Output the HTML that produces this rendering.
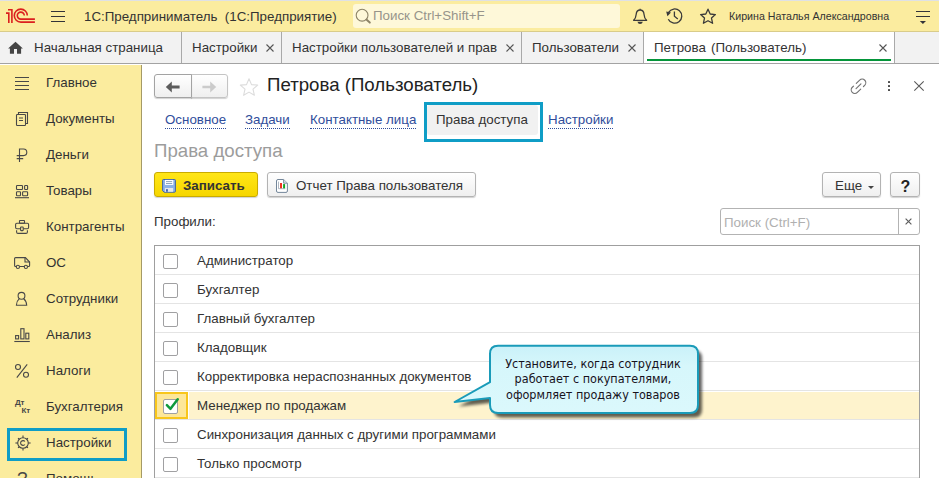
<!DOCTYPE html>
<html lang="ru">
<head>
<meta charset="utf-8">
<title>Петрова (Пользователь)</title>
<style>
html,body{margin:0;padding:0;}
body{width:939px;height:478px;overflow:hidden;position:relative;background:#fff;font-family:"Liberation Sans",Arial,sans-serif;color:#333;font-size:13.33px;line-height:16px;}
.a{position:absolute;white-space:nowrap;}
.t{position:absolute;white-space:nowrap;font-size:13.33px;line-height:16px;color:#333;}
svg{position:absolute;overflow:visible;}
#hdr{left:0;top:0;width:939px;height:32px;background:#fbec9f;}
#tabs{left:0;top:32px;width:939px;height:31px;background:#f2f2f2;}
.sep{position:absolute;top:32px;width:1px;height:31px;background:#a9a9a9;}
.lnk{position:absolute;white-space:nowrap;top:112px;font-size:13.33px;line-height:16px;color:#2f4d9b;}
.lnk i{position:absolute;left:0;right:0;top:16px;height:0;border-top:1px dotted #2f4d9b;}
.btn{position:absolute;box-sizing:border-box;border:1px solid #b3b3b3;border-radius:3px;background:linear-gradient(#ffffff,#efefef);box-shadow:0 1px 1px rgba(0,0,0,.18);}
.rs{position:absolute;left:155px;width:764px;height:1px;background:#e4e4e4;}
.cb{position:absolute;left:163px;width:13px;height:13px;border:1px solid #a0a0a2;border-radius:2px;background:#fff;}
.x{position:absolute;width:8px;height:8px;}
</style>
</head>
<body>

<div id="hdr" class="a"></div>
<div class="a" style="left:0;top:0;width:939px;height:1px;background:#dfe1e5"></div>
<div class="a" style="left:0;top:31px;width:939px;height:1px;background:#d9cc8a"></div>
<svg style="left:0px;top:0px" width="70" height="32" viewBox="0 0 70 32">
 <g fill="none" stroke="#db1f1f" stroke-width="1.6">
  <path d="M8 9.8 H11.9 V22.9"/>
  <path d="M6 13.1 H8.8 V22.9"/>
  <path d="M27.3 15.6 A6.5 6.5 0 1 0 20.8 22.1 H34.9"/>
  <path d="M24.3 15.6 A3.5 3.5 0 1 0 20.8 19.1 H34.9"/>
 </g>
 <g fill="none" stroke="#333338" stroke-width="1.2"><path d="M51 11.5 H65 M51 16.5 H65 M51 21.5 H65"/></g>
</svg>
<div class="t" style="left:84px;top:9px;">1С:Предприниматель&nbsp; (1С:Предприятие)</div>
<div class="a" style="left:353px;top:4px;width:267px;height:24px;background:#fef8d9;border-radius:3px;"></div>
<svg style="left:353px;top:4px" width="20" height="24" viewBox="353 4 20 24"><circle cx="362.1" cy="15.2" r="5.9" fill="none" stroke="#8d8468" stroke-width="1.1"/><path d="M366.4 19.6 L369.8 22.6" stroke="#8d8468" stroke-width="2" stroke-linecap="round"/></svg>
<div class="t" style="left:373px;top:8px;color:#97948b;">Поиск Ctrl+Shift+F</div>
<svg style="left:630px;top:6px" width="20" height="20" viewBox="630 6 20 20"><path d="M633.6 20.3 C635.6 18.6 636 16.8 636.2 14.2 C636.4 11.4 637.8 10 640.1 10 C642.4 10 643.8 11.4 644 14.2 C644.2 16.8 644.6 18.6 646.6 20.3 Z M640.1 10 V8.8" fill="none" stroke="#3a3a3a" stroke-width="1.3" stroke-linejoin="round"/><path d="M637.4 21.7 H642.8 Q642.2 23.9 640.1 23.9 Q638 23.9 637.4 21.7 Z" fill="#3a3a3a"/></svg>
<svg style="left:664px;top:6px" width="20" height="20" viewBox="664 6 20 20"><path d="M668.6 12.4 A7.1 7.1 0 1 1 668.3 19.2" fill="none" stroke="#3a3a3a" stroke-width="1.3"/><path d="M666.2 11.6 L671 12.4 L667.4 16.2 Z" fill="#3a3a3a"/><path d="M674.4 11.4 V16.2 L677.8 18.9" fill="none" stroke="#3a3a3a" stroke-width="1.3"/></svg>
<svg style="left:698px;top:6px" width="20" height="20" viewBox="698 6 20 20"><path d="M708 9.2 L710.2 14 L715.4 14.6 L711.5 18.1 L712.6 23.3 L708 20.7 L703.4 23.3 L704.5 18.1 L700.6 14.6 L705.8 14 Z" fill="none" stroke="#3a3a3a" stroke-width="1.3" stroke-linejoin="round"/></svg>
<div class="t" style="left:729px;top:8px;font-size:10.67px;">Кирина Наталья Александровна</div>
<svg style="left:912px;top:6px" width="22" height="20" viewBox="912 6 22 20"><path d="M916 11.5 H930 M916 16.5 H930" stroke="#333338" stroke-width="1.2" fill="none"/><path d="M919.8 20.9 H926 L922.9 23.9 Z" fill="#333338"/></svg>
<div id="tabs" class="a"></div>
<div class="a" style="left:644px;top:32px;width:250px;height:31px;background:#fff"></div>
<div class="a" style="left:0;top:63px;width:939px;height:1px;background:#a3a3a3"></div>
<div class="sep" style="left:181px"></div>
<div class="sep" style="left:281px"></div>
<div class="sep" style="left:521px"></div>
<div class="sep" style="left:643px"></div>
<div class="sep" style="left:894px"></div>
<svg style="left:6px;top:40px" width="18" height="16" viewBox="6 40 18 16"><path d="M15.5 41.8 L8.1 48.6 H9.9 V53.8 H14 V49 H17 V53.8 H21.1 V48.6 H22.9 Z" fill="#454545"/></svg>
<div class="t" style="left:34px;top:40px;">Начальная страница</div>
<div class="t" style="left:192px;top:40px;">Настройки</div>
<svg style="left:266px;top:44px" width="8" height="8" viewBox="0 0 8 8"><path d="M0.5 0.5 L7.5 7.5 M7.5 0.5 L0.5 7.5" stroke="#555" stroke-width="1.1" fill="none"/></svg>
<div class="t" style="left:292px;top:40px;">Настройки пользователей и прав</div>
<svg style="left:506px;top:44px" width="8" height="8" viewBox="0 0 8 8"><path d="M0.5 0.5 L7.5 7.5 M7.5 0.5 L0.5 7.5" stroke="#555" stroke-width="1.1" fill="none"/></svg>
<div class="t" style="left:532px;top:40px;">Пользователи</div>
<svg style="left:628px;top:44px" width="8" height="8" viewBox="0 0 8 8"><path d="M0.5 0.5 L7.5 7.5 M7.5 0.5 L0.5 7.5" stroke="#555" stroke-width="1.1" fill="none"/></svg>
<div class="t" style="left:654px;top:40px;word-spacing:1.5px">Петрова (Пользователь)</div>
<svg style="left:879px;top:44px" width="8" height="8" viewBox="0 0 8 8"><path d="M0.5 0.5 L7.5 7.5 M7.5 0.5 L0.5 7.5" stroke="#555" stroke-width="1.1" fill="none"/></svg>
<div class="a" style="left:647px;top:59px;width:244px;height:2px;background:#04953a"></div>
<div class="a" style="left:0;top:65px;width:141px;height:413px;background:#fbec9e;"></div>
<div class="a" style="left:141px;top:65px;width:1px;height:413px;background:#a59a66;"></div>
<div class="t" style="left:46px;top:75px">Главное</div>
<div class="t" style="left:46px;top:111px">Документы</div>
<div class="t" style="left:46px;top:147px">Деньги</div>
<div class="t" style="left:46px;top:183px">Товары</div>
<div class="t" style="left:46px;top:219px">Контрагенты</div>
<div class="t" style="left:46px;top:255px">ОС</div>
<div class="t" style="left:46px;top:291px">Сотрудники</div>
<div class="t" style="left:46px;top:327px">Анализ</div>
<div class="t" style="left:46px;top:363px">Налоги</div>
<div class="t" style="left:46px;top:399px">Бухгалтерия</div>
<div class="t" style="left:46px;top:435px">Настройки</div>
<div class="t" style="left:46px;top:471px">Помощь</div>
<div class="a" style="left:15px;top:77px;width:14px;height:1px;background:#484848"></div>
<div class="a" style="left:15px;top:81px;width:14px;height:1px;background:#484848"></div>
<div class="a" style="left:15px;top:85px;width:14px;height:1px;background:#484848"></div>
<div class="a" style="left:15px;top:89px;width:14px;height:1px;background:#484848"></div>
<svg style="left:14px;top:110px" width="16" height="18" viewBox="14 110 16 18" fill="none" stroke="#484848" stroke-width="1.1"><rect x="16.5" y="114.5" width="9" height="11" rx="0.8"/><path d="M18.5 114 V112.5 H27.5 V123.5 H26"/><path d="M19 118 H23 M19 120.5 H23"/></svg>
<svg style="left:14px;top:146px" width="16" height="18" viewBox="14 146 16 18" fill="none" stroke="#484848" stroke-width="1.1"><path d="M19.5 162 V149 H23.5 A3.3 3.3 0 0 1 23.5 155.6 H16.7 M16.7 158.6 H23.2"/></svg>
<svg style="left:14px;top:182px" width="16" height="18" viewBox="14 182 16 18" fill="none" stroke="#484848" stroke-width="1.1"><rect x="16.5" y="185.5" width="6" height="4" rx="0.7"/><rect x="24.6" y="185.5" width="3" height="4" rx="0.7"/><rect x="16.5" y="191.7" width="4" height="4" rx="0.7"/><rect x="22.6" y="191.7" width="5" height="4" rx="0.7"/><path d="M15 197.7 H29"/></svg>
<svg style="left:14px;top:218px" width="16" height="18" viewBox="14 218 16 18" fill="none" stroke="#484848" stroke-width="1.1"><rect x="19.5" y="220.5" width="5" height="2.8" rx="0.5"/><rect x="15.6" y="223.3" width="13" height="5.4" rx="1.2"/><path d="M16.6 230.2 V232 Q16.6 233.4 18 233.4 H26 Q27.4 233.4 27.4 232 V230.2"/><rect x="20.6" y="227" width="2.6" height="3.6" rx="0.5" fill="#fbed9e"/></svg>
<svg style="left:14px;top:254px" width="16" height="18" viewBox="14 254 16 18" fill="none" stroke="#484848" stroke-width="1.1"><path d="M16.2 266.5 H15.6 Q14.6 266.5 14.6 265.5 V258.6 Q14.6 257.6 15.6 257.6 H25.4 L29.6 262 V265.5 Q29.6 266.5 28.6 266.5 H27.6 M19.6 266.5 H24.2"/><path d="M25 257.8 V262 H29.4"/><circle cx="17.9" cy="266.9" r="1.6"/><circle cx="25.9" cy="266.9" r="1.6"/></svg>
<svg style="left:14px;top:290px" width="16" height="18" viewBox="14 290 16 18" fill="none" stroke="#484848" stroke-width="1.1"><circle cx="21.5" cy="295.8" r="3.4"/><path d="M19.3 298.7 Q16.6 301 16.4 305.3 H26.7 Q26.5 301 23.7 298.7"/></svg>
<svg style="left:14px;top:326px" width="16" height="18" viewBox="14 326 16 18" fill="none" stroke="#484848" stroke-width="1.1"><rect x="15.6" y="335.6" width="3" height="3.3"/><rect x="20.8" y="328.7" width="3.2" height="10.2"/><rect x="25.8" y="333.2" width="3" height="5.7"/><path d="M14.3 341.5 H29.8"/></svg>
<svg style="left:14px;top:362px" width="16" height="18" viewBox="14 362 16 18" fill="none" stroke="#484848" stroke-width="1.1"><circle cx="18" cy="367" r="2.5"/><circle cx="26" cy="374.7" r="2.5"/><path d="M27.2 364.3 L16.8 377.6"/></svg>
<div class="a" style="left:15px;top:398px;font-size:8px;line-height:10px;font-weight:bold;color:#484848;letter-spacing:-0.2px">Дт</div>
<div class="a" style="left:21.5px;top:406px;font-size:8px;line-height:10px;font-weight:bold;color:#484848;letter-spacing:-0.2px">Кт</div>
<svg style="left:14px;top:434px" width="18" height="18" viewBox="13.4 434.1 18 18" fill="none" stroke="#484848" stroke-width="1.1"><circle cx="22.4" cy="443.1" r="5.3"/><path d="M24.3 441.6 A2.4 2.4 0 1 0 24.3 444.6"/><path d="M27.70 443.10 L30.00 443.10"/><path d="M26.15 446.85 L27.35 448.05"/><path d="M22.40 448.40 L22.40 450.70"/><path d="M18.65 446.85 L17.45 448.05"/><path d="M17.10 443.10 L14.80 443.10"/><path d="M18.65 439.35 L17.45 438.15"/><path d="M22.40 437.80 L22.40 435.50"/><path d="M26.15 439.35 L27.35 438.15"/></svg>
<div class="a" style="left:17px;top:469px;font-size:19px;line-height:20px;color:#484848;">?</div>
<div class="a" style="left:7px;top:428px;width:114px;height:27px;border:3px solid #0f9dc6;"></div>
<div class="btn" style="left:191px;top:74px;width:37px;height:24px;border-color:#c4c4c4;border-radius:0 3px 3px 0;"></div>
<div class="btn" style="left:154px;top:74px;width:38px;height:24px;border-color:#a3a3a3;border-radius:3px 0 0 3px;"></div>
<svg style="left:165px;top:80.5px" width="16" height="12" viewBox="0 0 16 12"><path d="M6.8 0.6 L0.8 6 L6.8 11.4 V7.5 H14.6 V4.5 H6.8 Z" fill="#5c5c5c"/></svg>
<svg style="left:201px;top:80.5px" width="16" height="12" viewBox="0 0 16 12"><path d="M9.2 0.6 L15.2 6 L9.2 11.4 V7.3 H1.4 V4.7 H9.2 Z" fill="#cbcbcb"/></svg>
<svg style="left:239px;top:76.5px" width="20" height="20" viewBox="0 0 20 19"><path d="M10 1.3 L12.5 7.1 L18.7 7.6 L14 11.7 L15.4 17.8 L10 14.6 L4.6 17.8 L6 11.7 L1.3 7.6 L7.5 7.1 Z" fill="none" stroke="#dcdcdc" stroke-width="1.1" stroke-linejoin="round"/></svg>
<div class="a" style="left:267px;top:73px;font-size:18.67px;line-height:24px;color:#222;">Петрова (Пользователь)</div>
<svg style="left:848px;top:76px" width="22" height="22" viewBox="848 76 22 22"><g transform="rotate(-44 858.5 86.3) translate(858.5 86.3)" fill="none" stroke="#727272" stroke-width="1.15" stroke-linecap="round"><path d="M0.4 -3.6 H5.1 A3.6 3.6 0 0 1 5.1 3.6 H3.4"/><path d="M-0.4 3.6 H-5.1 A3.6 3.6 0 0 1 -5.1 -3.6 H-3.4"/><path d="M-3.4 0 H3.4"/></g></svg>
<div class="a" style="left:888px;top:81px;width:2px;height:2px;background:#4a4a4a;border-radius:0.5px"></div>
<div class="a" style="left:888px;top:85px;width:2px;height:2px;background:#4a4a4a;border-radius:0.5px"></div>
<div class="a" style="left:888px;top:89px;width:2px;height:2px;background:#4a4a4a;border-radius:0.5px"></div>
<svg style="left:914px;top:81px" width="10" height="10" viewBox="0 0 10 10"><path d="M0.3 0.3 L9.7 9.7 M9.7 0.3 L0.3 9.7" stroke="#5a5a5a" stroke-width="1.1"/></svg>
<div class="lnk" style="left:165px">Основное<i></i></div>
<div class="lnk" style="left:245px">Задачи<i></i></div>
<div class="lnk" style="left:310px">Контактные лица<i></i></div>
<div class="a" style="left:427px;top:105px;width:111px;height:30px;background:#f1f1f1;border-radius:3px"></div>
<div class="a" style="left:424px;top:102px;width:113px;height:34px;border:3px solid #0f9dc6;"></div>
<div class="t" style="left:436px;top:112px;">Права доступа</div>
<div class="lnk" style="left:548px">Настройки<i></i></div>
<div class="a" style="left:154px;top:139px;font-size:18.67px;line-height:24px;color:#9c9c9c;">Права доступа</div>
<div class="btn" style="left:154px;top:172px;width:104px;height:25px;background:linear-gradient(#ffe617,#f6d600);border-color:#c9ab00;"></div>
<svg style="left:160px;top:177px" width="18" height="18" viewBox="160 177 18 18"><path d="M162.6 180.3 Q162.6 179.5 163.4 179.5 H174.6 Q175.4 179.5 175.4 180.3 V191.4 Q175.4 192.2 174.6 192.2 H164.2 L162.6 190.7 Z" fill="#8db3e6" stroke="#3f62a3" stroke-width="1"/><rect x="165" y="179.9" width="8.3" height="5" fill="#fff"/><path d="M166 181.6 H172.2 M166 183.5 H172.2" stroke="#7f9cb5" stroke-width="0.9"/><rect x="164.9" y="188" width="8.2" height="3.8" fill="#e3e7ea"/><rect x="166" y="189.2" width="1.9" height="2.5" fill="#3b60b3"/></svg>
<div class="t" style="left:183px;top:178px;font-weight:bold;">Записать</div>
<div class="btn" style="left:267px;top:172px;width:209px;height:25px;"></div>
<svg style="left:274px;top:177px" width="18" height="18" viewBox="274 177 18 18"><path d="M276.5 181 Q276.5 179.5 278 179.5 H283.6 L287.4 183.2 V191 Q287.4 192.4 286 192.4 H278 Q276.5 192.4 276.5 191 Z" fill="#fff" stroke="#73869a" stroke-width="1"/><path d="M283.6 179.6 V183.2 H287.3" fill="#dfe4ea" stroke="#73869a" stroke-width="0.9"/><path d="M278.5 181.6 V188.7 H285.3" fill="none" stroke="#9aa6b2" stroke-width="0.8"/><rect x="280" y="183" width="2" height="5.3" fill="#ef3221"/><rect x="283.1" y="184.1" width="2" height="4.2" fill="#12a323"/></svg>
<div class="t" style="left:296px;top:178px;">Отчет Права пользователя</div>
<div class="btn" style="left:822px;top:172px;width:59px;height:25px;"></div>
<div class="t" style="left:835px;top:178px;">Еще</div>
<svg style="left:868px;top:186px" width="6" height="3" viewBox="0 0 6 3"><path d="M0 0 H6 L3 3 Z" fill="#444"/></svg>
<div class="btn" style="left:890px;top:172px;width:30px;height:25px;"></div>
<div class="a" style="left:900.5px;top:178px;font-size:16px;line-height:18px;font-weight:bold;color:#222;">?</div>
<div class="t" style="left:154px;top:214px;">Профили:</div>
<div class="a" style="left:720px;top:208px;width:200px;height:27px;border:1px solid #b3b3b3;border-radius:3px;box-sizing:border-box;background:#fff"></div>
<div class="a" style="left:898px;top:209px;width:1px;height:25px;background:#b3b3b3"></div>
<div class="t" style="left:724px;top:215px;color:#b0b0b0;">Поиск (Ctrl+F)</div>
<svg style="left:905px;top:218px" width="7" height="7" viewBox="0 0 7 7"><path d="M0.6 0.6 L6.4 6.4 M6.4 0.6 L0.6 6.4" stroke="#5c5c5c" stroke-width="1.15"/></svg>
<div class="a" style="left:154px;top:245px;width:766px;height:240px;border:1px solid #9f9f9f;box-sizing:border-box;"></div>
<div class="a" style="left:189px;top:392px;width:730px;height:27px;background:#fef3cd"></div>
<div class="a" style="left:155px;top:392px;width:33px;height:27px;background:#fde799;border:2px solid #f8c61c;box-sizing:border-box"></div>
<div class="rs" style="top:274px"></div>
<i class="cb" style="top:254px"></i>
<div class="t" style="left:197px;top:253px">Администратор</div>
<div class="rs" style="top:303px"></div>
<i class="cb" style="top:283px"></i>
<div class="t" style="left:197px;top:282px">Бухгалтер</div>
<div class="rs" style="top:332px"></div>
<i class="cb" style="top:312px"></i>
<div class="t" style="left:197px;top:311px">Главный бухгалтер</div>
<div class="rs" style="top:361px"></div>
<i class="cb" style="top:341px"></i>
<div class="t" style="left:197px;top:340px">Кладовщик</div>
<div class="rs" style="top:390px"></div>
<i class="cb" style="top:370px"></i>
<div class="t" style="left:197px;top:369px">Корректировка нераспознанных документов</div>
<div class="rs" style="top:419px"></div>
<i class="cb" style="top:399px"></i>
<div class="t" style="left:197px;top:398px">Менеджер по продажам</div>
<div class="rs" style="top:448px"></div>
<i class="cb" style="top:428px"></i>
<div class="t" style="left:197px;top:427px">Синхронизация данных с другими программами</div>
<div class="rs" style="top:477px"></div>
<i class="cb" style="top:457px"></i>
<div class="t" style="left:197px;top:456px">Только просмотр</div>
<svg style="left:164px;top:396px" width="16" height="16" viewBox="164 396 16 16"><path d="M166.9 405.2 L170.5 408.8 L177.7 399.2" fill="none" stroke="#0f9a3c" stroke-width="2.5" stroke-linecap="round" stroke-linejoin="round"/></svg>
<svg style="left:440px;top:336px" width="280" height="100" viewBox="440 336 280 100">
<defs><linearGradient id="cg" x1="0" y1="0" x2="0" y2="1"><stop offset="0" stop-color="#caf1f9"/><stop offset="0.3" stop-color="#d6f7fb"/><stop offset="1" stop-color="#dbf8fc"/></linearGradient>
<filter id="sh" x="-10%" y="-20%" width="130%" height="150%"><feGaussianBlur stdDeviation="1.8"/></filter></defs>
<path d="M498 345.8 H690 Q698 345.8 698 353.8 V405 Q698 413 690 413 H498 Q490 413 490 405 V398 L454.6 402 L490 382.2 V353.8 Q490 345.8 498 345.8 Z" transform="translate(4,4.5)" fill="#000" opacity="0.62" filter="url(#sh)"/>
<path d="M498 345.8 H690 Q698 345.8 698 353.8 V405 Q698 413 690 413 H498 Q490 413 490 405 V398 L454.6 402 L490 382.2 V353.8 Q490 345.8 498 345.8 Z" fill="url(#cg)" stroke="#1a9bb9" stroke-width="2" stroke-linejoin="round"/>
</svg>
<div class="a" style="left:489px;top:355.6px;width:208px;font-family:'DejaVu Sans Condensed','DejaVu Sans',sans-serif;font-stretch:condensed;font-size:12.5px;line-height:15.8px;color:#17121c;text-align:center;white-space:nowrap">Установите, когда сотрудник<br>работает с покупателями,<br>оформляет продажу товаров</div>
</body>
</html>
